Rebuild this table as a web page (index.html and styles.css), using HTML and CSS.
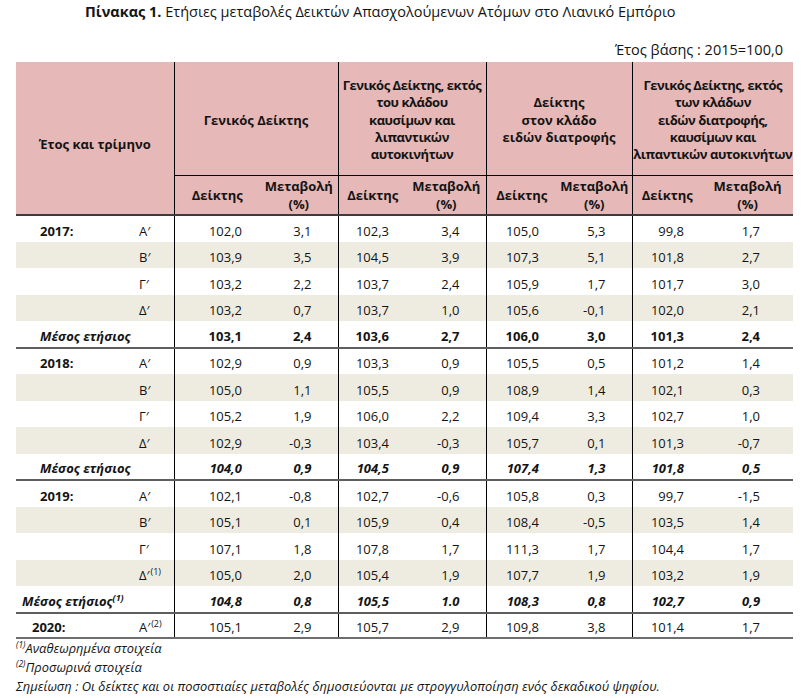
FILE: index.html
```html
<!DOCTYPE html>
<html lang="el">
<head>
<meta charset="utf-8">
<title>Πίνακας 1</title>
<link rel="stylesheet" href="styles.css">
</head>
<body>
<div class="page">
  <h1 class="title"><b>Πίνακας 1.</b> Ετήσιες μεταβολές Δεικτών Απασχολούμενων Ατόμων στο Λιανικό Εμπόριο</h1>
  <p class="base">Έτος βάσης : 2015=100,0</p>
  <table class="tbl">
    <colgroup>
      <col class="c-year"><col class="c-q">
      <col class="c-g1a"><col class="c-g1b">
      <col class="c-g2a"><col class="c-g2b">
      <col class="c-g3a"><col class="c-g3b">
      <col class="c-g4a"><col class="c-g4b">
    </colgroup>
    <thead>
      <tr class="h1">
        <th colspan="2" rowspan="2" class="hfirst">Έτος και τρίμηνο</th>
        <th colspan="2" class="vl">Γενικός Δείκτης</th>
        <th colspan="2" class="vl nowrap">Γενικός Δείκτης, εκτός<br>του κλάδου<br>καυσίμων και<br>λιπαντικών<br>αυτοκινήτων</th>
        <th colspan="2" class="vl">Δείκτης<br>στον κλάδο<br>ειδών διατροφής</th>
        <th colspan="2" class="vl nowrap">Γενικός Δείκτης, εκτός<br>των κλάδων<br>ειδών διατροφής,<br>καυσίμων και<br>λιπαντικών αυτοκινήτων</th>
      </tr>
      <tr class="h2">
        <th class="vl">Δείκτης</th><th>Μεταβολή<br>(%)</th>
        <th class="vl">Δείκτης</th><th>Μεταβολή<br>(%)</th>
        <th class="vl">Δείκτης</th><th>Μεταβολή<br>(%)</th>
        <th class="vl">Δείκτης</th><th>Μεταβολή<br>(%)</th>
      </tr>
    </thead>
    <tbody>
      <tr><td class="yr">2017:</td><td class="q">Α′</td><td class="a vl">102,0</td><td class="b">3,1</td><td class="a vl">102,3</td><td class="b">3,4</td><td class="a vl">105,0</td><td class="b">5,3</td><td class="a vl">99,8</td><td class="b last">1,7</td></tr>
      <tr class="alt"><td class="yr"></td><td class="q">Β′</td><td class="a vl">103,9</td><td class="b">3,5</td><td class="a vl">104,5</td><td class="b">3,9</td><td class="a vl">107,3</td><td class="b">5,1</td><td class="a vl">101,8</td><td class="b last">2,7</td></tr>
      <tr><td class="yr"></td><td class="q">Γ′</td><td class="a vl">103,2</td><td class="b">2,2</td><td class="a vl">103,7</td><td class="b">2,4</td><td class="a vl">105,9</td><td class="b">1,7</td><td class="a vl">101,7</td><td class="b last">3,0</td></tr>
      <tr class="alt"><td class="yr"></td><td class="q">Δ′</td><td class="a vl">103,2</td><td class="b">0,7</td><td class="a vl">103,7</td><td class="b">1,0</td><td class="a vl">105,6</td><td class="b">-0,1</td><td class="a vl">102,0</td><td class="b last">2,1</td></tr>
      <tr class="avg bold"><td colspan="2" class="lbl">Μέσος ετήσιος</td><td class="a vl">103,1</td><td class="b">2,4</td><td class="a vl">103,6</td><td class="b">2,7</td><td class="a vl">106,0</td><td class="b">3,0</td><td class="a vl">101,3</td><td class="b last">2,4</td></tr>

      <tr><td class="yr">2018:</td><td class="q">Α′</td><td class="a vl">102,9</td><td class="b">0,9</td><td class="a vl">103,3</td><td class="b">0,9</td><td class="a vl">105,5</td><td class="b">0,5</td><td class="a vl">101,2</td><td class="b last">1,4</td></tr>
      <tr class="alt"><td class="yr"></td><td class="q">Β′</td><td class="a vl">105,0</td><td class="b">1,1</td><td class="a vl">105,5</td><td class="b">0,9</td><td class="a vl">108,9</td><td class="b">1,4</td><td class="a vl">102,1</td><td class="b last">0,3</td></tr>
      <tr><td class="yr"></td><td class="q">Γ′</td><td class="a vl">105,2</td><td class="b">1,9</td><td class="a vl">106,0</td><td class="b">2,2</td><td class="a vl">109,4</td><td class="b">3,3</td><td class="a vl">102,7</td><td class="b last">1,0</td></tr>
      <tr class="alt"><td class="yr"></td><td class="q">Δ′</td><td class="a vl">102,9</td><td class="b">-0,3</td><td class="a vl">103,4</td><td class="b">-0,3</td><td class="a vl">105,7</td><td class="b">0,1</td><td class="a vl">101,3</td><td class="b last">-0,7</td></tr>
      <tr class="avg bold ital"><td colspan="2" class="lbl">Μέσος ετήσιος</td><td class="a vl">104,0</td><td class="b">0,9</td><td class="a vl">104,5</td><td class="b">0,9</td><td class="a vl">107,4</td><td class="b">1,3</td><td class="a vl">101,8</td><td class="b last">0,5</td></tr>

      <tr><td class="yr">2019:</td><td class="q">Α′</td><td class="a vl">102,1</td><td class="b">-0,8</td><td class="a vl">102,7</td><td class="b">-0,6</td><td class="a vl">105,8</td><td class="b">0,3</td><td class="a vl">99,7</td><td class="b last">-1,5</td></tr>
      <tr class="alt"><td class="yr"></td><td class="q">Β′</td><td class="a vl">105,1</td><td class="b">0,1</td><td class="a vl">105,9</td><td class="b">0,4</td><td class="a vl">108,4</td><td class="b">-0,5</td><td class="a vl">103,5</td><td class="b last">1,4</td></tr>
      <tr><td class="yr"></td><td class="q">Γ′</td><td class="a vl">107,1</td><td class="b">1,8</td><td class="a vl">107,8</td><td class="b">1,7</td><td class="a vl">111,3</td><td class="b">1,7</td><td class="a vl">104,4</td><td class="b last">1,7</td></tr>
      <tr class="alt"><td class="yr"></td><td class="q">Δ′<sup>(1)</sup></td><td class="a vl">105,0</td><td class="b">2,0</td><td class="a vl">105,4</td><td class="b">1,9</td><td class="a vl">107,7</td><td class="b">1,9</td><td class="a vl">103,2</td><td class="b last">1,9</td></tr>
      <tr class="avg bold ital"><td colspan="2" class="lbl lbl-tight">Μέσος ετήσιος<sup>(1)</sup></td><td class="a vl">104,8</td><td class="b">0,8</td><td class="a vl">105,5</td><td class="b">1.0</td><td class="a vl">108,3</td><td class="b">0,8</td><td class="a vl">102,7</td><td class="b last">0,9</td></tr>

      <tr class="end"><td class="yr yr-2020">2020:</td><td class="q">Α′<sup>(2)</sup></td><td class="a vl">105,1</td><td class="b">2,9</td><td class="a vl">105,7</td><td class="b">2,9</td><td class="a vl">109,8</td><td class="b">3,8</td><td class="a vl">101,4</td><td class="b last">1,7</td></tr>
    </tbody>
  </table>
  <div class="notes">
    <p><sup>(1)</sup>Αναθεωρημένα στοιχεία</p>
    <p><sup>(2)</sup>Προσωρινά στοιχεία</p>
    <p>Σημείωση : Οι δείκτες και οι ποσοστιαίες μεταβολές δημοσιεύονται με στρογγυλοποίηση ενός δεκαδικού ψηφίου.</p>
  </div>
</div>
</body>
</html>
```
FILE: styles.css
```css
html, body {
  margin: 0;
  padding: 0;
  background: #ffffff;
}

body {
  font-family: "Open Sans", "Noto Sans", sans-serif;
  color: #141414;
  font-size: 13px;
}

.page {
  padding: 0 12px 0 16px;
  width: 777px;
}

.title {
  margin: 0;
  padding: 2px 0 0 69px;
  font-size: 14.5px;
  line-height: 20px;
  font-weight: 400;
  white-space: nowrap;
}

.title b {
  font-weight: 700;
}

.base {
  margin: 18px 10px 2px 0;
  text-align: right;
  font-size: 14.5px;
  line-height: 20px;
}

.tbl {
  border-collapse: collapse;
  table-layout: fixed;
  width: 777px;
}

.c-year { width: 123px; }
.c-q { width: 35px; }
.c-g1a { width: 86px; }
.c-g1b { width: 78px; }
.c-g2a { width: 69px; }
.c-g2b { width: 79px; }
.c-g3a { width: 71px; }
.c-g3b { width: 75px; }
.c-g4a { width: 70px; }
.c-g4b { width: 91px; }

.tbl th {
  background: #e6b8b7;
  font-weight: 700;
  text-align: center;
  padding: 0;
  line-height: 17.3px;
}

.h1 {
  height: 113px;
}

.h1 th {
  vertical-align: middle;
  padding-top: 4px;
}

.hfirst {
  border-bottom: 2px solid #3c3c3c;
  padding-top: 14px !important;
}

.nowrap {
  white-space: nowrap;
  letter-spacing: -0.45px;
}

.h2 {
  height: 40px;
}

.h2 th {
  border-top: 1px solid #000;
  border-bottom: 2px solid #3c3c3c;
  vertical-align: middle;
  line-height: 17.7px;
  padding-top: 2px;
}

.tbl .vl {
  border-left: 1px solid #000;
}

.tbl tbody tr {
  height: 26.5px;
}

.tbl tbody tr.end {
  height: 25px;
}

.tbl td {
  padding: 0 0 2px 0;
  line-height: 17px;
  vertical-align: bottom;
  white-space: nowrap;
}

.tbl tr.end td {
  padding-bottom: 1px;
}

.tbl tr.alt td {
  background: #eeece1;
}

.yr {
  font-weight: 700;
  padding-left: 24px !important;
}

.yr-2020 {
  padding-left: 16px !important;
}

.q {
  text-align: left;
}

.q sup {
  margin-left: 1px;
}

.a {
  text-align: right;
  padding-right: 18px !important;
}

.b {
  text-align: right;
  padding-right: 26px !important;
}

.b.last {
  padding-right: 33px !important;
}

.lbl {
  padding-left: 24px !important;
  font-style: italic;
}

.lbl-tight {
  padding-left: 6px !important;
}

.bold td {
  font-weight: 700;
}

.ital td {
  font-style: italic;
}

.avg td {
  border-bottom: 2px solid #5e5e5e;
}

.end td {
  border-bottom: 2px solid #6e6e6e;
}

sup {
  font-size: 9px;
  line-height: 0;
  vertical-align: 5px;
}

.notes {
  padding-top: 0;
}

.notes p {
  margin: 0;
  font-style: italic;
  font-size: 12.9px;
  line-height: 19px;
  white-space: nowrap;
}

.notes sup {
  font-size: 8.5px;
}
```
